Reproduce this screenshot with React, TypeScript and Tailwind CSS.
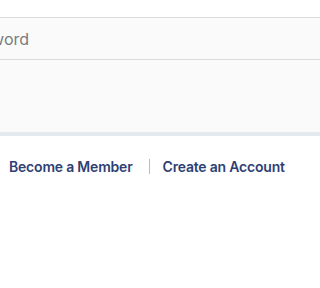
export default function App() {
  return (
    <div className="w-full min-w-[288px] h-[288px] overflow-hidden bg-white" style={{ fontFamily: "Inter, 'Noto Sans', sans-serif" }}>
      <div className="h-[17px] bg-white" />
      <div className="h-[43px] border-y border-[#dcdcdc] bg-[#fafafa] flex items-center">
        <span className="ml-[-45px] mt-[1px] text-[16px] text-[#7a7a7a] whitespace-nowrap">Password</span>
      </div>
      <div className="h-[72px] bg-[#fafafa]" />
      <div className="h-[4px] bg-[#e4ebf0]" />
      <div className="flex items-center pt-[20px] pl-[9px] text-[14px] font-semibold text-[#2e3f73] whitespace-nowrap">
        <span className="tracking-[-0.2px]">Become a Member</span>
        <span className="ml-[16px] mr-[13px] w-px h-[15px] bg-[#b3bdd2]" />
        <span className="tracking-[-0.2px]">Create an Account</span>
      </div>
    </div>
  );
}
